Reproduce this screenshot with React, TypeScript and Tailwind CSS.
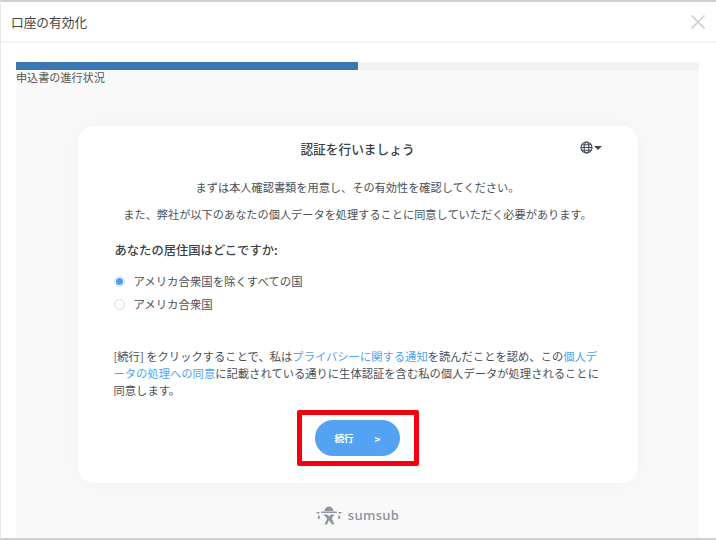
import React from 'react';
import { X } from 'lucide-react';

const jp = { fontFamily: '"Noto Sans CJK JP", "Noto Sans", sans-serif' };

const GlobeIcon = () => (
  <svg width="13" height="13" viewBox="0 0 13 13" fill="none" stroke="#3f4656" strokeWidth="1.1">
    <circle cx="6.5" cy="6.5" r="5.5" />
    <ellipse cx="6.5" cy="6.5" rx="2.4" ry="5.5" />
    <path d="M1 6.5h11M1.8 3.7h9.4M1.8 9.3h9.4" />
  </svg>
);

const SumsubLogo = () => (
  <svg width="26" height="20" viewBox="0 0 26 20" fill="#8f959e">
    <path d="M8.5 5 C9 1.8 11 0.5 13 0.5 C15 0.5 17 1.8 17.5 5 Z" />
    <rect x="5" y="5.4" width="16" height="1.7" rx="0.8" />
    <path d="M7.6 8.6h3.6l1.8 2 1.8-2h3.6l-2.6 3.8 2.6 6.1h-2.4L13 14.2l-2 4.3H8.6l2.6-6.1z" />
    <rect x="0.5" y="6" width="3" height="1.6" rx="0.5" />
    <rect x="22.5" y="6" width="3" height="1.6" rx="0.5" />
    <rect x="2" y="9.5" width="1.7" height="3.4" rx="0.5" />
    <rect x="22.3" y="9.5" width="1.7" height="3.4" rx="0.5" />
  </svg>
);

const RadioRow = ({ label, checked }: { label: string; checked?: boolean }) => (
  <div className="flex items-center h-[23px]">
    <span
      className={`w-[11px] h-[11px] rounded-full flex items-center justify-center bg-white border ${
        checked ? 'border-[#c3d9f5]' : 'border-[#d5d8ee]'
      }`}
    >
      {checked && <span className="w-[7px] h-[7px] rounded-full bg-[#4f9cf0]" />}
    </span>
    <span className="ml-[9px] text-[11.4px] text-[#4a4f58]">{label}</span>
  </div>
);

export default function App() {
  return (
    <div
      className="w-[716px] h-[540px] overflow-hidden bg-white border-t-2 border-l border-b-2 border-t-[#d0d0d0] border-l-[#e6e6e6] border-b-[#d0d0d0] flex flex-col"
      style={jp}
    >
      <div className="h-[41px] shrink-0 border-b-2 border-[#f4f4f4] flex items-center justify-between pl-[10px] pr-[6px]">
        <h1 className="text-[12.7px] text-[#444]">口座の有効化</h1>
        <X size={24} strokeWidth={1.8} className="text-[#d6d6d6]" />
      </div>

      <div className="flex-1 min-h-0 pl-[15px] pr-[17px] pt-[19px]">
        <div className="h-[8px] bg-[#f2f2f2]">
          <div className="h-full w-[342px] bg-[#3a78b5]" />
        </div>
        <div className="h-full bg-[#f9f9f9] flex flex-col items-center">
          <div className="self-start text-[11.1px] leading-[15px] text-[#555]">申込書の進行状況</div>

          <div className="mt-[41px] w-[560px] h-[357px] shrink-0 bg-white rounded-[16px] shadow-[0_0_24px_rgba(0,0,0,0.035)] pl-[36px] pr-[41px] pt-[13px] flex flex-col">
            <div className="relative flex justify-center h-[20px] items-center pl-[5px]">
              <h2 className="text-[12.7px] font-medium text-[#3a3f4a]">認証を行いましょう</h2>
              <div className="absolute right-[-5px] top-[2px] flex items-center gap-[1px]">
                <GlobeIcon />
                <span className="w-0 h-0 border-x-[4px] border-x-transparent border-t-[4px] border-t-[#3f4656]" />
              </div>
            </div>

            <p className="mt-[20px] pl-[5px] text-center text-[11.2px] leading-[16px] text-[#4a4f58]">
              まずは本人確認書類を用意し、その有効性を確認してください。
            </p>
            <p className="mt-[11px] pl-[5px] text-center text-[11.2px] leading-[16px] text-[#4a4f58] whitespace-nowrap">
              また、弊社が以下のあなたの個人データを処理することに同意していただく必要があります。
            </p>

            <h3 className="mt-[18px] pl-[1px] text-[12.3px] leading-[20px] font-medium text-[#3a3f4a]">あなたの居住国はどこですか:</h3>

            <div className="mt-[10px]">
              <RadioRow label="アメリカ合衆国を除くすべての国" checked />
              <RadioRow label="アメリカ合衆国" />
            </div>

            <p className="mt-[32px] -mr-[4px] text-[11.3px] leading-[17px] text-[#4a4f58] [line-break:anywhere]">
              [続行] をクリックすることで、私は<span className="text-[#4da3f5]">プライバシーに関する通知</span>を読んだことを認め、この<span className="text-[#4da3f5]">個人データの処理への同意</span>に記載されている通りに生体認証を含む私の個人データが処理されることに同意します。
            </p>

            <div className="mt-[11px] self-center ml-[5px] w-[122px] h-[56px] border-[5px] border-[#f5000f] rounded-[2px] flex items-center justify-center">
              <button className="w-[85px] h-[36px] rounded-full bg-[#54a2f2] text-white text-[9.5px] font-bold flex items-center justify-center gap-[21px]">
                <span>続行</span>
                <span className="text-[10px]">&gt;</span>
              </button>
            </div>
          </div>

          <div className="mt-[23px] flex items-center gap-[6px]">
            <SumsubLogo />
            <span className="text-[13px] font-semibold tracking-[0.3px] text-[#8f959e]" style={{ fontFamily: '"Open Sans", sans-serif' }}>
              sumsub
            </span>
          </div>
        </div>
      </div>
    </div>
  );
}
